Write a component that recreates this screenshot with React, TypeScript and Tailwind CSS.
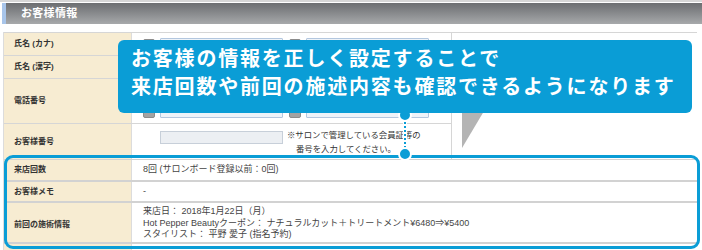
import React from "react";

const Input = ({ w = 123, h = 12 }: { w?: number; h?: number }) => (
  <div
    className="border border-[#b3c7df] bg-[#eef3f9] rounded-[1px]"
    style={{ width: w, height: h }}
  />
);

const Sq = () => <div className="w-[12px] h-[11px] rounded-[2px] bg-[#a3a3a3] border border-[#8c8c8c]" />;

const Pair = () => (
  <div className="flex items-center">
    <Sq />
    <div className="ml-[5px]">
      <Input />
    </div>
    <div className="ml-[6px]">
      <Sq />
    </div>
    <div className="ml-[5px]">
      <Input />
    </div>
  </div>
);

export default function App() {
  return (
    <div
      className="relative w-[702px] h-[250px] overflow-hidden bg-white text-[#333]"
      style={{ fontFamily: '"Liberation Sans", "Noto Sans CJK JP", sans-serif' }}
    >
      {/* top line */}
      <div className="h-[3px] border-t-2 border-[#d6d6d6]" />
      {/* header */}
      <div className="flex h-[21px] ml-[2px]">
        <div className="w-[4px] bg-[#a8c5ea]" />
        <div className="flex-1 flex items-center bg-gradient-to-b from-[#6c6e71] to-[#a7a9ab] pl-[15px]">
          <span className="text-[11px] font-bold text-white leading-none tracking-[0.3px]">お客様情報</span>
        </div>
      </div>
      <div className="h-[8px]" />

      {/* table */}
      <div className="ml-[3px] w-[694px]">
        {/* upper */}
        <div className="flex">
          <div className="w-[448px] border-l border-[#dcdcdc]">
            {[
              { label: "氏名 (カナ)", h: 23, body: <Pair /> },
              { label: "氏名 (漢字)", h: 23, body: <Pair /> },
              {
                label: "電話番号",
                h: 45,
                body: (
                  <div className="flex flex-col gap-[10px]">
                    <Pair />
                    <Pair />
                  </div>
                ),
              },
              {
                label: "お客様番号",
                h: 36,
                body: (
                  <div className="flex ml-[17px]">
                    <div className="pt-[4px]">
                      <div className="w-[123px] h-[13px] border border-[#c7cfd9] bg-[#eceff3]" />
                    </div>
                    <div className="ml-[4px] text-[8.4px] leading-[14px] text-[#333] pt-[1px]">
                      <div>※サロンで管理している会員証等の</div>
                      <div className="pl-[9px]">番号を入力してください。</div>
                    </div>
                  </div>
                ),
              },
            ].map((r, i) => (
              <div key={i} className="flex border-t border-[#d6d6d6]" style={{ height: r.h }}>
                <div className="w-[128px] bg-[#f7ecd2] border-r border-[#dcdcdc] flex items-center pl-[10px]">
                  <span className="text-[8px] font-bold leading-none">{r.label}</span>
                </div>
                <div className="flex-1 flex items-center pl-[11px]">{r.body}</div>
              </div>
            ))}
          </div>
          <div className="flex-1 border-l border-t border-[#d6d6d6] pl-[10px] pt-[68px]">
            <svg width="28" height="48" viewBox="0 0 28 48">
              <polygon points="0,0 28,0 0,47" fill="#b4b4b4" />
            </svg>
          </div>
        </div>

        {/* lower */}
        <div className="border-l border-[#dcdcdc]">
          <div className="flex h-[21px] border-t border-[#d2d2d2]">
            <div className="w-[128px] bg-[#f7ecd2] border-r border-[#dcdcdc] flex items-center pl-[10px]">
              <span className="text-[8px] font-bold leading-none">来店回数</span>
            </div>
            <div className="flex-1 flex items-center pl-[11px] text-[9px] text-[#444]">
              8回 (サロンボード登録以前：0回)
            </div>
          </div>
          <div className="flex h-[21px] border-t-2 border-[#d2d2d2]">
            <div className="w-[128px] bg-[#f7ecd2] border-r border-[#dcdcdc] flex items-center pl-[10px]">
              <span className="text-[8px] font-bold leading-none">お客様メモ</span>
            </div>
            <div className="flex-1 flex items-center pl-[11px] text-[9px] text-[#444]">-</div>
          </div>
          <div className="flex h-[41px] border-t-2 border-[#d2d2d2]">
            <div className="w-[128px] bg-[#f7ecd2] border-r border-[#dcdcdc] flex items-center pl-[10px] pt-[4px]">
              <span className="text-[8px] font-bold leading-none">前回の施術情報</span>
            </div>
            <div className="flex-1 flex flex-col justify-center pl-[11px] pt-[2px] text-[9px] leading-[11.5px] text-[#444]">
              <div>来店日： 2018年1月22日（月）</div>
              <div>Hot Pepper Beautyクーポン： ナチュラルカット＋トリートメント¥6480⇒¥5400</div>
              <div>スタイリスト： 平野 愛子 (指名予約)</div>
            </div>
          </div>
          <div className="flex h-[10px] border-t-2 border-[#d2d2d2]">
            <div className="w-[128px] bg-[#f7ecd2] border-r border-[#dcdcdc]" />
            <div className="flex-1" />
          </div>
        </div>
      </div>

      {/* highlight frame */}
      <div className="absolute left-[4px] top-[155px] w-[696px] h-[94px] border-[3px] border-[#0a9dd6] rounded-[9px]" />

      {/* connector */}
      <div className="absolute left-[403px] top-[118px] w-[4px] h-[34px] bg-white flex justify-center">
        <div className="h-full border-l-2 border-dotted border-[#0a9dd6]" />
      </div>
      <div className="absolute left-[398px] top-[108px] w-[14px] h-[14px] rounded-full bg-[#0a9dd6] border-2 border-white" />
      <div className="absolute left-[398px] top-[147px] w-[14px] h-[14px] rounded-full bg-[#0a9dd6] border-2 border-white" />

      {/* callout */}
      <div
        className="absolute left-[118px] top-[40px] w-[574px] h-[73px] rounded-[6px] bg-[#0a9dd6] pl-[13px] pt-[4px] text-white font-bold text-[20px] leading-[28px] tracking-[1.8px]"
        style={{ fontFamily: '"Noto Sans CJK JP", sans-serif' }}
      >
        <div>お客様の情報を正しく設定することで</div>
        <div>来店回数や前回の施述内容も確認できるようになります</div>
      </div>
    </div>
  );
}
